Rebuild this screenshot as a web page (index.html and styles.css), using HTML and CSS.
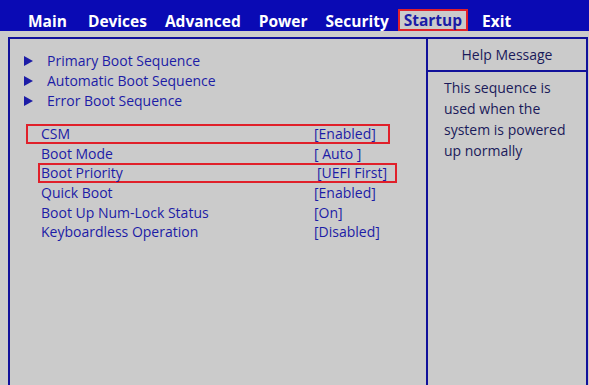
FILE: index.html
```html
<!doctype html>
<html lang="en">
<head>
    <meta charset="UTF-8">
    <title>Startup</title>
    <link rel="stylesheet" href="styles.css">
</head>
<body>
<div class="bios">
    <nav class="menu">
        <span class="tab">Main</span>
        <span class="tab">Devices</span>
        <span class="tab">Advanced</span>
        <span class="tab">Power</span>
        <span class="tab">Security</span>
        <span class="tab active">Startup</span>
        <span class="tab">Exit</span>
    </nav>

    <section class="panel">
        <div class="settings">
            <ul class="submenus">
                <li><span class="arrow"></span>Primary Boot Sequence</li>
                <li><span class="arrow"></span>Automatic Boot Sequence</li>
                <li><span class="arrow"></span>Error Boot Sequence</li>
            </ul>

            <div class="options">
                <div class="row row-csm"><span class="name">CSM</span><span class="value">[Enabled]</span></div>
                <div class="row"><span class="name">Boot Mode</span><span class="value">[ Auto ]</span></div>
                <div class="row row-priority"><span class="name">Boot Priority</span><span class="value">[UEFI First]</span></div>
                <div class="row"><span class="name">Quick Boot</span><span class="value">[Enabled]</span></div>
                <div class="row"><span class="name">Boot Up Num-Lock Status</span><span class="value">[On]</span></div>
                <div class="row"><span class="name">Keyboardless Operation</span><span class="value">[Disabled]</span></div>
            </div>
        </div>

        <aside class="help">
            <div class="help-title">Help Message</div>
            <p class="help-text">This sequence is used when the system is powered up normally</p>
        </aside>
    </section>
</div>
</body>
</html>
```

FILE: styles.css
```css
html, body {
    margin: 0;
    height: 100%;
    overflow: hidden;
    background: #cbcbcb;
}

.bios {
    font-family: "Open Sans", "Noto Sans", sans-serif;
    color: #1c1ca6;
    height: 100%;
    display: flex;
    flex-direction: column;
}

/* top menu bar */
.menu {
    background: #0a0ab4;
    height: 31px;
    display: flex;
    align-items: flex-end;
    padding-left: 19px;
    box-sizing: border-box;
    flex-shrink: 0;
}

.tab {
    color: #ffffff;
    font-weight: 700;
    font-size: 15.5px;
    padding: 0 7px;
    line-height: 18px;
    height: 18px;
    padding-bottom: 1px;
    border: 2px solid transparent;
    border-bottom: none;
}

.tab:first-child {
    margin-right: 3px;
}

.tab.active {
    background: #cbcbcb;
    color: #1c1ca6;
    border: 2px solid #e0202a;
    padding: 0 4px;
    margin: 0 5px 0 0;
}

/* main frame */
.panel {
    margin: 6px 1px 0 8px;
    flex: 1;
    display: grid;
    grid-template-columns: 418px 1fr;
    border: 2px solid #10109a;
    border-bottom: none;
}

.settings {
    border-right: 2px solid #10109a;
    padding-top: 12px;
}

.submenus {
    list-style: none;
    margin: 0;
    padding: 0 0 0 14px;
    font-size: 14px;
}

.submenus li {
    height: 20px;
    line-height: 20px;
    display: flex;
    align-items: center;
}

.arrow {
    width: 0;
    height: 0;
    border-left: 9px solid #1c1ca6;
    border-top: 5px solid transparent;
    border-bottom: 5px solid transparent;
    margin-right: 14px;
}

.options {
    margin-top: 13px;
    font-size: 14px;
}

.row {
    display: flex;
    height: 19.4px;
    line-height: 19px;
    padding-left: 31px;
}

.name {
    width: 273px;
}

.row-csm {
    margin-left: 16px;
    padding-left: 13px;
    width: 364px;
    border: 2px solid #e0202a;
    box-sizing: border-box;
    height: 20px;
    line-height: 16px;
}

.row-csm .name {
    width: 273px;
}

.row-priority {
    margin-left: 28px;
    padding-left: 1px;
    width: 359px;
    border: 2px solid #e0202a;
    box-sizing: border-box;
    height: 20px;
    line-height: 16px;
}

.row-priority .name {
    width: 276px;
}

.help {
    display: flex;
    flex-direction: column;
}

.help-title {
    height: 33px;
    line-height: 31px;
    text-align: center;
    font-size: 14px;
    color: #1a1a5a;
    border-bottom: 2px solid #10109a;
    box-sizing: border-box;
}

.help-text {
    margin: 0;
    padding: 5px 14px 0 16px;
    font-size: 14px;
    line-height: 21px;
    color: #1a1a5a;
}
```
